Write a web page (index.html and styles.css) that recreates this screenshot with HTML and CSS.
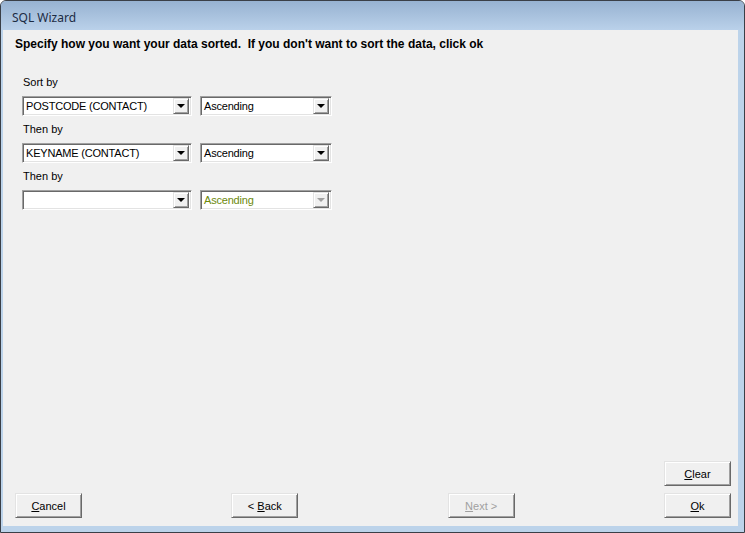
FILE: index.html
```html
<!DOCTYPE html>
<html lang="en">
<head>
  <meta charset="UTF-8">
  <title>SQL Wizard</title>
  <link rel="stylesheet" href="styles.css">
</head>
<body>

  <div class="janela">
    <div class="titulo">SQL Wizard</div>
    <div class="cliente">
      <div class="instrucao">Specify how you want your data sorted.&nbsp; If you don't want to sort the data, click ok</div>

      <div class="ordenacao">
        <div class="rotulo">Sort by</div>
        <div class="linha">
          <div class="combo campo"><span class="valor">POSTCODE (CONTACT)</span><span class="seta"></span></div>
          <div class="combo ordem"><span class="valor">Ascending</span><span class="seta"></span></div>
        </div>

        <div class="rotulo">Then by</div>
        <div class="linha">
          <div class="combo campo"><span class="valor">KEYNAME (CONTACT)</span><span class="seta"></span></div>
          <div class="combo ordem"><span class="valor">Ascending</span><span class="seta"></span></div>
        </div>

        <div class="rotulo">Then by</div>
        <div class="linha">
          <div class="combo campo"><span class="valor"></span><span class="seta"></span></div>
          <div class="combo ordem desativado"><span class="valor">Ascending</span><span class="seta"></span></div>
        </div>
      </div>

      <div class="rodape">
        <div class="linha-limpar">
          <button class="botao"><u>C</u>lear</button>
        </div>
        <div class="botoes">
          <button class="botao"><u>C</u>ancel</button>
          <button class="botao">&lt; <u>B</u>ack</button>
          <button class="botao desativado" disabled><u>N</u>ext &gt;</button>
          <button class="botao"><u>O</u>k</button>
        </div>
      </div>
    </div>
  </div>

</body>
</html>
```

FILE: styles.css
```css
body {
  margin: 0;
  background: #fff;
  font-family: "Liberation Sans", Arial, sans-serif;
  font-size: 11px;
  color: #000;
}

.janela {
  width: 745px;
  height: 533px;
  box-sizing: border-box;
  display: flex;
  flex-direction: column;
  border: 1px solid #3a3f47;
  border-radius: 6px 6px 0 0;
  background: #bcd3ea;
  padding: 0 6px 6px 2px;
}

.titulo {
  height: 29px;
  margin: 0 -6px 0 -2px;
  padding-left: 11px;
  line-height: 34px;
  font-family: "Noto Sans", "Open Sans", sans-serif;
  font-size: 12px;
  color: #1c2c44;
  background: linear-gradient(#97b2d1, #bad1ea);
  border-radius: 5px 5px 0 0;
}

.cliente {
  flex: 1;
  display: flex;
  flex-direction: column;
  background: #f0f0f0;
  padding: 7px 7px 8px 12px;
}

.instrucao {
  font-weight: bold;
  font-size: 12px;
  line-height: 14px;
  white-space: nowrap;
}

.ordenacao {
  margin-top: 24px;
  padding-left: 7px;
}

.rotulo {
  line-height: 14px;
  padding-left: 1px;
  margin-bottom: 7px;
}

.linha {
  display: flex;
  gap: 8px;
  margin-bottom: 6px;
}

.combo {
  height: 20px;
  box-sizing: border-box;
  display: flex;
  align-items: center;
  background: #fff;
  border: 1px solid;
  border-color: #a0a0a0 #fff #fff #a0a0a0;
  box-shadow: inset 1px 1px #696969, inset -1px -1px #e3e3e3;
  padding: 2px 2px 2px 3px;
}

.campo {
  width: 170px;
}

.ordem {
  width: 132px;
}

.valor {
  flex: 1;
  line-height: 14px;
  white-space: nowrap;
  letter-spacing: -0.2px;
}

.seta {
  width: 16px;
  height: 16px;
  box-sizing: border-box;
  background: #f0f0f0;
  border: 1px solid;
  border-color: #e3e3e3 #696969 #696969 #e3e3e3;
  box-shadow: inset 1px 1px #fff, inset -1px -1px #a0a0a0;
  position: relative;
}

.seta::after {
  content: "";
  position: absolute;
  left: 3px;
  top: 5px;
  border-left: 4px solid transparent;
  border-right: 4px solid transparent;
  border-top: 4px solid #000;
}

.desativado .valor {
  color: #6d8a0c;
}

.desativado .seta::after {
  border-top-color: #a0a0a0;
}

.rodape {
  margin-top: auto;
  display: flex;
  flex-direction: column;
  gap: 7px;
}

.linha-limpar {
  display: flex;
  justify-content: flex-end;
}

.botoes {
  display: flex;
  justify-content: space-between;
}

.botao {
  width: 67px;
  height: 25px;
  box-sizing: border-box;
  padding: 0;
  font-family: "Liberation Sans", Arial, sans-serif;
  font-size: 11px;
  color: #000;
  background: #f0f0f0;
  border: 1px solid;
  border-color: #e3e3e3 #696969 #696969 #e3e3e3;
  box-shadow: inset 1px 1px #fff, inset -1px -1px #a0a0a0;
}

.botao.desativado {
  color: #a0a0a0;
}
```
